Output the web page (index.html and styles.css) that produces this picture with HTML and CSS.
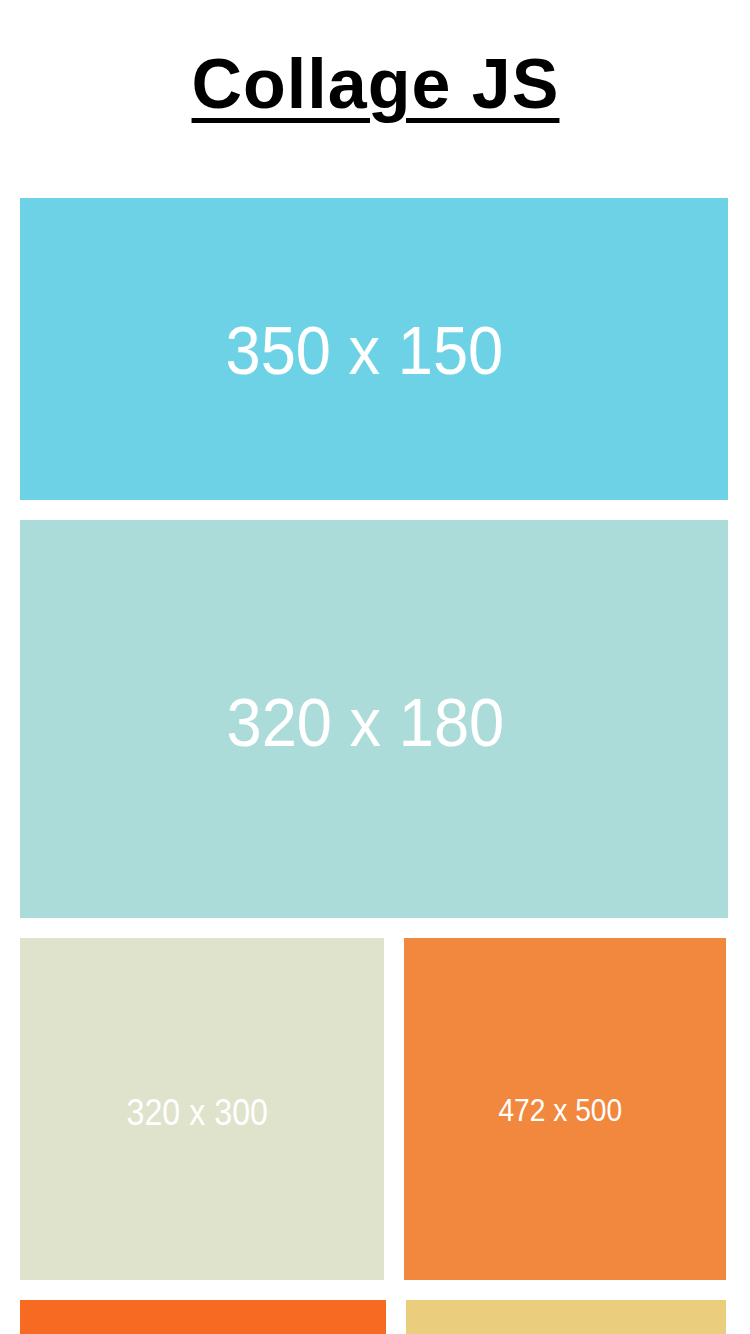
FILE: index.html
```html
<!DOCTYPE html>
<html lang="en">
<head>
<meta charset="utf-8">
<title>Collage JS</title>
<link rel="stylesheet" href="styles.css">
</head>
<body>
<h1 class="title">Collage JS</h1>
<div class="collage">
  <div class="row">
    <div class="tile t1"><span class="label l1">350 x 150</span></div>
  </div>
  <div class="row">
    <div class="tile t2"><span class="label l2">320 x 180</span></div>
  </div>
  <div class="row">
    <div class="tile t3"><span class="label l3">320 x 300</span></div>
    <div class="tile t4"><span class="label l4">472 x 500</span></div>
  </div>
  <div class="row">
    <div class="tile t5"></div>
    <div class="tile t6"></div>
  </div>
</div>
</body>
</html>
```

FILE: styles.css
```css
html, body {
  margin: 0;
  background: #ffffff;
}
body {
  padding: 20px 20px 0 20px;
  font-family: "Liberation Sans", Arial, Helvetica, sans-serif;
  display: flex;
  flex-direction: column;
  gap: 20px;
  overflow: hidden;
  height: 1334px;
  box-sizing: border-box;
}
.title {
  margin: 0;
  padding: 29px 0 59px 1px;
  font-size: 70px;
  line-height: 70px;
  letter-spacing: 1px;
  font-weight: bold;
  text-align: center;
  text-decoration: underline;
  text-decoration-thickness: 5px;
  text-underline-offset: 10px;
  color: #000000;
}
.collage {
  display: flex;
  flex-direction: column;
  gap: 20px;
  width: 708px;
}
.row {
  display: flex;
  gap: 20px;
}
.tile {
  display: flex;
  align-items: center;
  justify-content: center;
  flex: none;
}
.label {
  color: #ffffff;
  line-height: 1;
  white-space: nowrap;
  font-family: "Liberation Sans", Arial, Helvetica, sans-serif;
}
.t1 { width: 708px; height: 302px; background: #6dd2e6; }
.t2 { width: 708px; height: 398px; background: #acdcd9; }
.t3 { width: 364px; height: 342px; background: #e0e3cc; }
.t4 { width: 322px; height: 342px; background: #f2883e; }
.t5 { width: 366px; height: 220px; background: #f76a22; }
.t6 { width: 320px; height: 220px; background: #ebcd7e; }

.l1 { font-size: 68px; transform: scaleX(0.93); margin-right: 20px; margin-top: 2px; }
.l2 { font-size: 68px; transform: scaleX(0.93); margin-right: 18px; margin-top: 6px; }
.l3 { font-size: 37px; transform: scaleX(0.87); margin-right: 10px; margin-top: 6px; }
.l4 { font-size: 32px; transform: scaleX(0.88); margin-right: 10px; margin-top: 2px; }
```
